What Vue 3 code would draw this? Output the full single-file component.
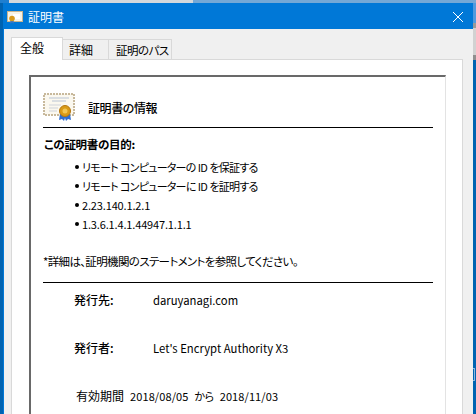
<script setup>
const purposes = [
  { text: 'リモート コンピューターの ID を保証する', num: false },
  { text: 'リモート コンピューターに ID を証明する', num: false },
  { text: '2.23.140.1.2.1', num: true },
  { text: '1.3.6.1.4.1.44947.1.1.1', num: true },
]
</script>

<template>
  <div class="desk">
    <div class="top-strip">
      <span class="seg seg-blue"></span>
      <span class="seg seg-grey"></span>
      <span class="seg seg-light"></span>
    </div>
    <div class="middle">
      <div class="window">
        <header class="titlebar">
          <svg class="title-icon" width="16" height="16" viewBox="0 0 16 16">
            <rect x="0.5" y="2.5" width="15" height="10" fill="#f7f3e6" stroke="#c9b48f" />
            <rect x="6" y="5" width="7" height="5" fill="#fff" />
            <path d="M3.5 11l-.5 3.500 2-1 2 1-.5-3.500z" fill="#3b78c9" />
            <circle cx="5" cy="9.500" r="2.800" fill="#d89a1c" />
          </svg>
          <span class="title-text">証明書</span>
          <svg class="close" width="10" height="10" viewBox="0 0 10 10">
            <path d="M0 0l10 10M10 0L0 10" stroke="#fff" stroke-width="1" fill="none" />
          </svg>
        </header>
        <div class="content">
          <nav class="tabs">
            <div class="tab active">全般</div>
            <div class="tab second">詳細</div>
            <div class="tab third">証明のパス</div>
          </nav>
          <div class="panel">
            <div class="info">
              <div class="info-head">
                <svg class="cert" width="32" height="28" viewBox="0 0 32 28">
                  <rect x="1" y="1" width="30" height="21" fill="#fbf8ef" stroke="#c8b99c" stroke-width="2" stroke-dasharray="2 1" />
                  <path d="M6 5h20M9 8h14" stroke="#b9c4d4" stroke-width="1" />
                  <path d="M6 12h12M6 15h9M6 18h8" stroke="#cfd3da" stroke-width="1" />
                  <path d="M17 21l-1 6 3-1 2 2 1-3 1 3 2-2 3 1-1-6z" fill="#2f6fd0" />
                  <circle cx="22" cy="18" r="5.500" fill="#d99b17" stroke="#b5770f" />
                  <circle cx="22" cy="18" r="2.500" fill="#f1c654" />
                </svg>
                <span class="info-title">証明書の情報</span>
              </div>
              <div class="rule"></div>
              <div class="purpose-label">この証明書の目的:</div>
              <ul class="purposes">
                <li v-for="p in purposes" :key="p.text" class="purpose">
                  <span class="bullet"></span><span :class="p.num ? 'num' : 'jp'">{{ p.text }}</span>
                </li>
              </ul>
              <div class="note">*詳細は、証明機関のステートメントを参照してください。</div>
              <div class="rule rule-2"></div>
              <div class="field">
                <span class="field-label">発行先:</span>
                <span class="field-value">daruyanagi.com</span>
              </div>
              <div class="field">
                <span class="field-label">発行者:</span>
                <span class="field-value wide">Let's Encrypt Authority X3</span>
              </div>
              <div class="validity">
                <span class="validity-label">有効期間</span>
                <span class="date">2018/08/05</span>
                <span class="kara">から</span>
                <span class="date">2018/11/03</span>
              </div>
            </div>
          </div>
        </div>
      </div>
      <div class="right-strip">
        <span class="r-blue"></span>
        <span class="r-dark"></span>
        <span class="r-pale"></span>
        <span class="r-dark short"></span>
        <span class="r-glyph"></span>
      </div>
    </div>
  </div>
</template>

<style>
html, body { margin: 0; padding: 0; overflow: hidden; }
</style>

<style scoped>
.desk {
  width: 476px;
  height: 414px;
  overflow: hidden;
  background: #0063b1;
  font-family: "Noto Sans CJK JP", "Noto Sans", sans-serif;
  font-feature-settings: "palt";
  color: #000;
  font-size: 12px;
}
.top-strip { display: flex; height: 3px; }
.seg-blue { width: 9px; background: #1f7fd0; }
.seg-grey { width: 184px; background: #d4d8dc; }
.seg-light { flex: 1; background: #74a8d6; }
.middle { display: flex; height: 411px; }
.window {
  width: 470px;
  margin-left: 3px;
  display: flex;
  flex-direction: column;
  background: #f0f0f0;
  border-left: 1px solid #0078d7;
  box-sizing: border-box;
}
.right-strip { flex: 1; display: flex; flex-direction: column; }
.r-blue { height: 20px; background: #4f9ade; }
.r-dark { height: 5px; background: #9a9a9a; }
.r-pale { height: 27px; background: #d2d2d2; }
.r-dark.short { height: 5px; background: #8f8f8f; }
.r-glyph {
  margin-top: 308px;
  width: 1px;
  height: 11px;
  border: 1px solid #8ab8e0;
  border-left: 0;
}
.titlebar {
  height: 26px;
  margin-left: -1px;
  background: #0078d7;
  display: flex;
  align-items: center;
  padding: 0 10px 0 4px;
  flex: none;
}
.title-icon { flex: none; margin-top: 1px; }
.title-text { color: #fff; font-size: 12px; margin-left: 5px; }
.close { margin-left: auto; margin-top: 1px; }
.content { padding: 8px 10px 0 7px; flex: 1; display: flex; flex-direction: column; min-height: 0; }
.tabs { display: flex; height: 22px; align-items: flex-end; position: relative; z-index: 1; flex: none; }
.tab {
  height: 20px;
  line-height: 20px;
  box-sizing: border-box;
  background: #f0f0f0;
  border: 1px solid #d9d9d9;
  border-bottom: 0;
  margin-left: -1px;
  white-space: nowrap;
}
.tab.second { width: 47px; padding-left: 6px; }
.tab.third { width: 64px; padding-left: 7px; font-size: 11.5px; letter-spacing: -0.5px; }
.tab.active {
  margin-left: 0;
  width: 52px;
  height: 23px;
  line-height: 20px;
  background: #fff;
  padding-left: 8px;
  margin-bottom: -1px;
}
.panel {
  flex: 1;
  background: #fff;
  border: 1px solid #d9d9d9;
  border-bottom: 0;
  padding: 15px 16px 0 17px;
  min-height: 0;
}
.info {
  height: 100%;
  border-top: 2px solid #696969;
  border-left: 2px solid #696969;
  border-right: 1px solid #e3e3e3;
  padding: 16px 0 0 12px;
  box-sizing: border-box;
}
.info-head { display: flex; align-items: flex-start; height: 29px; }
.cert { flex: none; }
.info-title { margin-left: 13px; line-height: 18px; margin-top: 6px; font-weight: 500; letter-spacing: -0.4px; }
.rule { height: 1px; background: #000; width: 390px; margin-top: 5px; }
.purpose-label { margin: 6px 0 0 1px; font-weight: 700; height: 20px; line-height: 20px; font-size: 11.5px; letter-spacing: -0.3px; }
.purposes { list-style: none; margin: 3px 0 0; padding: 0 0 0 32px; }
.purpose { display: flex; align-items: center; height: 19px; }
.bullet { width: 4px; height: 4px; border-radius: 50%; background: #000; margin-right: 3px; flex: none; }
.jp { font-size: 11px; letter-spacing: -0.75px; word-spacing: 0.5px; white-space: nowrap; }
.num { font-size: 11px; letter-spacing: -0.15px; }
.note { margin-top: 19px; height: 18px; line-height: 18px; font-size: 11.5px; letter-spacing: -0.65px; white-space: nowrap; }
.rule-2 { margin-top: 12px; }
.field { display: flex; height: 48px; padding: 8px 0 0 31px; box-sizing: border-box; line-height: 18px; }
.field-label { width: 79px; font-weight: 500; }
.field-value { font-size: 11.3px; }
.field-value.wide { letter-spacing: 0.01px; }
.validity { display: flex; padding-left: 33px; line-height: 18px; margin-top: 8px; }
.date { margin-left: 6px; font-size: 11px; letter-spacing: 0.1px; }
.kara { margin-left: 6px; letter-spacing: -0.5px; font-size: 11px; }
</style>
